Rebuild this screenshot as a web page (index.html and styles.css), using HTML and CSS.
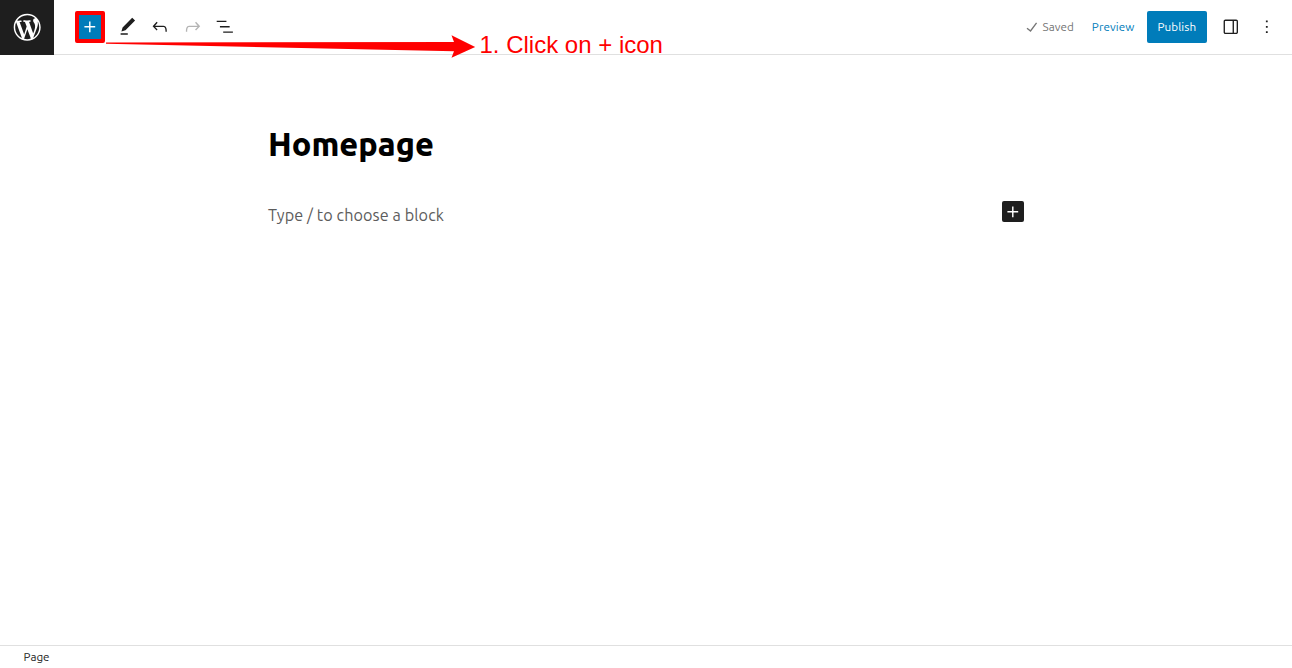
FILE: index.html
```
<!DOCTYPE html>
<html lang="en">
<head>
<meta charset="utf-8">
<title>Homepage</title>
<link rel="stylesheet" href="styles.css">
</head>
<body>
<div class="editor">
  <header class="header">
    <div class="logo">
      <svg viewBox="-2 -2 24 24"><path d="M20 10c0-5.51-4.49-10-10-10C4.48 0 0 4.49 0 10c0 5.52 4.48 10 10 10 5.51 0 10-4.48 10-10zM7.78 15.37L4.37 6.22c.55-.02 1.17-.08 1.17-.08.5-.06.44-1.13-.06-1.11 0 0-1.45.11-2.37.11-.18 0-.37 0-.58-.01C4.12 2.69 6.87 1.11 10 1.11c2.33 0 4.45.87 6.05 2.34-.68-.11-1.65.39-1.65 1.58 0 .74.45 1.36.9 2.1.35.61.55 1.36.55 2.46 0 1.49-1.4 5-1.4 5l-3.03-8.37c.54-.02.82-.17.82-.17.5-.05.44-1.25-.06-1.22 0 0-1.44.12-2.38.12-.87 0-2.33-.12-2.33-.12-.5-.03-.56 1.2-.06 1.22l.92.08 1.26 3.41zM17.41 10c.24-.64.74-1.87.43-4.25.7 1.29 1.05 2.71 1.05 4.25 0 3.29-1.73 6.24-4.4 7.78.97-2.59 1.94-5.2 2.92-7.78zM6.1 18.09C3.12 16.65 1.11 13.53 1.11 10c0-1.3.23-2.48.72-3.59C3.25 10.3 4.67 14.2 6.1 18.09zm4.03-6.63l2.58 6.98c-.86.29-1.76.45-2.71.45-.79 0-1.57-.11-2.29-.33.81-2.38 1.62-4.74 2.42-7.1z"/></svg>
    </div>
    <div class="tools">
      <button class="inserter"><svg class="icon" viewBox="0 0 24 24"><path d="M18 11.2h-5.2V6h-1.6v5.2H6v1.6h5.2V18h1.6v-5.2H18z"/></svg></button>
      <svg class="icon" viewBox="0 0 24 24"><path d="M20.1 5.1L16.9 2 6.2 12.7l-1.3 4.4 4.5-1.3L20.1 5.1zM4 20.8h8v-1.5H4v1.5z"/></svg>
      <svg class="icon" viewBox="0 0 24 24"><path d="M18.3 11.7c-.6-.6-1.4-.9-2.3-.9H6.7l2.9-3.3-1.1-1-4.5 5L8.5 16l1-1-2.7-2.7H16c.5 0 .9.2 1.3.5 1 1 1 3.4 1 4.5v.3h1.5v-.2c0-1.5 0-4.3-1.5-5.7z"/></svg>
      <svg class="icon disabled" viewBox="0 0 24 24"><path d="M15.6 6.5l-1.1 1 2.9 3.3H8c-.9 0-1.7.3-2.3.9-1.4 1.5-1.4 4.2-1.4 5.6v.2h1.5v-.3c0-1.1 0-3.5 1-4.5.3-.3.7-.5 1.3-.5h9.2L14.5 15l1.1 1.1 4.6-4.6-4.6-5z"/></svg>
      <svg class="icon" viewBox="0 0 24 24"><path d="M13.8 5.2H3v1.5h10.8V5.2zm-3.6 12v1.5H21v-1.5H10.2zm7.2-6H6.6v1.5h10.8v-1.5z"/></svg>
    </div>
    <div class="settings">
      <span class="saved"><svg class="icon" viewBox="0 0 24 24"><path d="M16.7 7.1l-6.3 8.5-3.3-2.5-.9 1.2 4.5 3.4L17.9 8z"/></svg><span class="label">Saved</span></span>
      <a class="preview label">Preview</a>
      <button class="publish">Publish</button>
      <svg class="icon sidebar-toggle" viewBox="0 0 24 24"><path d="M18 4H6c-1.1 0-2 .9-2 2v12c0 1.1.9 2 2 2h12c1.1 0 2-.9 2-2V6c0-1.1-.9-2-2-2zm-4 14.5H6c-.3 0-.5-.2-.5-.5V6c0-.3.2-.5.5-.5h8v13zm4.5-.5c0 .3-.2.5-.5.5h-2.5v-13H18c.3 0 .5.2.5.5v12z"/></svg>
      <svg class="icon" viewBox="0 0 24 24"><path d="M13 19h-2v-2h2v2zm0-6h-2v-2h2v2zm0-6h-2V5h2v2z"/></svg>
    </div>
  </header>
  <main class="canvas">
    <h1 class="title">Homepage</h1>
    <div class="block">
      <p class="placeholder">Type / to choose a block</p>
      <button class="add-block"><svg class="icon" viewBox="0 0 24 24"><path d="M18 11.2h-5.2V6h-1.6v5.2H6v1.6h5.2V18h1.6v-5.2H18z"/></svg></button>
    </div>
  </main>
  <footer class="footer"><span class="label">Page</span></footer>
  <div class="callout">
    <svg class="arrow" viewBox="0 0 370 24"><path d="M0 7.4L348 7 345.5 0.3 369.2 12 345.5 22.8 348 16.3 0 8.8z"/></svg>
    <span class="callout-text">1. Click on + icon</span>
  </div>
</div>
</body>
</html>
```
FILE: styles.css
```
* { box-sizing: border-box; }
body {
  margin: 0;
  font-family: Ubuntu, "Noto Sans", sans-serif;
  font-weight: 440;
  color: #1e1e1e;
  background: #fff;
}
button { border: 0; padding: 0; font: inherit; }
svg { display: block; flex: none; }
.editor {
  position: relative;
  display: flex;
  flex-direction: column;
  height: 668px;
  overflow: hidden;
}
.header {
  display: flex;
  height: 55px;
  flex: none;
  border-bottom: 1px solid #e0e0e0;
}
.logo {
  width: 54px;
  height: 55px;
  flex: none;
  display: flex;
  align-items: center;
  justify-content: center;
  background: #1e1e1e;
}
.logo svg { width: 32.4px; height: 32.4px; fill: #fff; }
.icon { width: 21.6px; height: 21.6px; fill: #1e1e1e; }
.disabled { fill: #b4b4b4; }
.tools {
  display: flex;
  align-items: center;
  gap: 10.8px;
  padding-left: 21px;
}
.inserter {
  width: 30px;
  height: 32px;
  margin-right: 1px;
  display: flex;
  align-items: center;
  justify-content: center;
  background: #007cba;
  border: 4px solid #f00;
  border-radius: 2px;
}
.inserter .icon, .add-block .icon { fill: #fff; }
.settings {
  display: flex;
  align-items: center;
  margin-left: auto;
  padding-right: 14.1px;
  font-size: 11.7px;
}
.label { padding-bottom: 2px; }
.saved {
  display: flex;
  align-items: center;
  width: 71px;
  color: #757575;
}
.saved .icon { fill: #757575; }
.saved .label { letter-spacing: 0.08px; }
.preview { width: 55px; color: #007cba; letter-spacing: 0.08px; }
.publish {
  width: 60px;
  height: 32px;
  padding-bottom: 2px;
  color: #fff;
  background: #007cba;
  border-radius: 2px;
  letter-spacing: 0.08px;
}
.sidebar-toggle { margin: 0 14.4px 0 13.5px; }
.canvas {
  flex: 1;
  width: 756px;
  margin: 0 auto;
  padding-top: 65px;
}
.title {
  margin: 0;
  font-size: 32.4px;
  font-weight: 800;
  line-height: 48px;
  color: #000;
}
.block {
  display: flex;
  justify-content: space-between;
  align-items: flex-start;
  margin-top: 33px;
}
.placeholder {
  margin: 0;
  font-size: 16.2px;
  line-height: 28px;
  letter-spacing: 0.08px;
  color: #5c5c5c;
}
.add-block {
  width: 22px;
  height: 21px;
  display: flex;
  align-items: center;
  justify-content: center;
  background: #1e1e1e;
  border-radius: 2px;
}
.footer {
  display: flex;
  align-items: center;
  height: 23px;
  flex: none;
  padding-left: 23.5px;
  border-top: 1px solid #e0e0e0;
  font-size: 11.7px;
}
/* Annotation drawn over the toolbar */
.callout {
  position: absolute;
  left: 106px;
  top: 31px;
  display: flex;
  align-items: center;
  gap: 3.5px;
  color: #f00;
}
.arrow { width: 370px; height: 24px; margin-top: 3px; fill: #f00; }
.callout-text {
  font: 24px/28px "Liberation Sans", Arial, sans-serif;
  white-space: nowrap;
}
```
